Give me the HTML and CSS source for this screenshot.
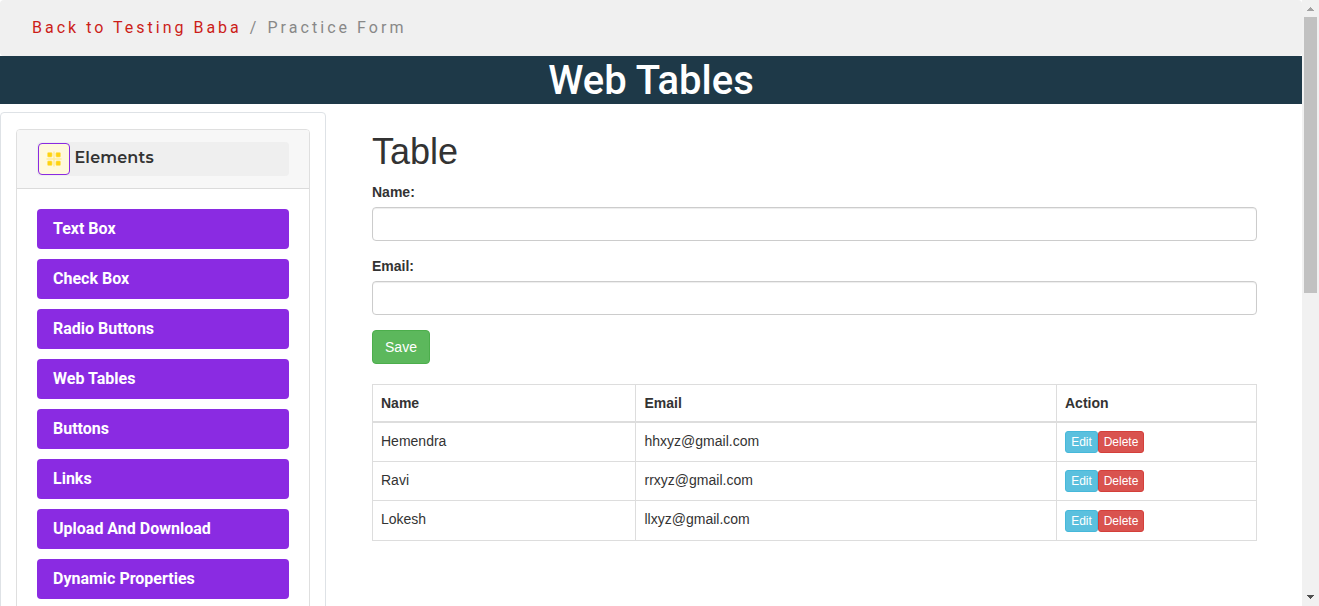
FILE: index.html
```html
<!DOCTYPE html>
<html lang="en">
<head>
<meta charset="utf-8">
<title>Web Tables</title>
<link rel="stylesheet" href="styles.css">
</head>
<body>
<div class="window">
  <div class="page">
    <nav class="breadcrumb"><a class="crumb-link">Back to Testing Baba</a><span class="crumb-rest">/</span><span class="crumb-rest">Practice Form</span></nav>
    <h1 class="title">Web Tables</h1>
    <div class="columns">
      <aside class="sidebar">
        <div class="card">
          <div class="card-header">
            <div class="toggle">
              <span class="icon-box">
                <svg width="16" height="16" viewBox="0 0 16 16">
                  <path d="M8 0.5V15.5M0.5 8H15.5" stroke="#ffeb99" stroke-width="1.4"/>
                  <g fill="#ffd30f" stroke="#ffe26a" stroke-width="0.6">
                    <rect x="1.5" y="1.5" width="4.6" height="4.6" rx="1"/>
                    <rect x="9.9" y="1.5" width="4.6" height="4.6" rx="1"/>
                    <rect x="1.5" y="9.9" width="4.6" height="4.6" rx="1"/>
                    <rect x="9.9" y="9.9" width="4.6" height="4.6" rx="1"/>
                  </g>
                </svg>
              </span>
              <span class="toggle-label">Elements</span>
            </div>
          </div>
          <div class="menu">
            <a class="menu-item">Text Box</a>
            <a class="menu-item">Check Box</a>
            <a class="menu-item">Radio Buttons</a>
            <a class="menu-item">Web Tables</a>
            <a class="menu-item">Buttons</a>
            <a class="menu-item">Links</a>
            <a class="menu-item">Upload And Download</a>
            <a class="menu-item">Dynamic Properties</a>
          </div>
        </div>
      </aside>
      <main class="content">
        <h2 class="heading">Table</h2>
        <label class="label" for="name">Name:</label>
        <input class="field" id="name" type="text">
        <label class="label" for="email">Email:</label>
        <input class="field" id="email" type="text">
        <button class="save">Save</button>
        <table class="table">
          <thead><tr><th class="col-name">Name</th><th class="col-email">Email</th><th class="col-action">Action</th></tr></thead>
          <tbody>
            <tr><td>Hemendra</td><td class="mail">hhxyz@gmail.com</td><td><div class="actions"><button class="btn edit">Edit</button><button class="btn delete">Delete</button></div></td></tr>
            <tr><td>Ravi</td><td class="mail">rrxyz@gmail.com</td><td><div class="actions"><button class="btn edit">Edit</button><button class="btn delete">Delete</button></div></td></tr>
            <tr class="last"><td>Lokesh</td><td class="mail">llxyz@gmail.com</td><td><div class="actions"><button class="btn edit">Edit</button><button class="btn delete">Delete</button></div></td></tr>
          </tbody>
        </table>
      </main>
    </div>
  </div>
  <div class="scrollbar">
    <svg class="arrow" width="17" height="17" viewBox="0 0 17 17" shape-rendering="crispEdges"><path d="M8 7h1v1h1v1h1v1h1v1H5v-1h1V9h1V8h1z" fill="#a3a3a3"/></svg>
    <div class="thumb"></div>
    <svg class="arrow arrow-down" width="17" height="17" viewBox="0 0 17 17" shape-rendering="crispEdges"><path d="M5 6h7v1h-1v1h-1v1H9v1H8V9H7V8H6V7H5z" fill="#505050"/></svg>
  </div>
</div>
</body>
</html>
```
FILE: styles.css
```css
* { box-sizing: border-box; }
body { margin: 0; overflow: hidden; background: #fff; }
.window { display: flex; height: 606px; overflow: hidden; }
.page { flex: 1; height: 606px; overflow: hidden; }
.breadcrumb {
  display: flex; gap: 8px;
  height: 56px; padding: 16px 32px; background: #f0f0f0; border-radius: 4px;
  font: 400 16px/24px Roboto, sans-serif; letter-spacing: 3px; color: #888;
}
.crumb-link { color: #cc1d18; }
.crumb-rest { letter-spacing: 3.05px; }
.title {
  margin: 0; height: 48px; background: #1e3948; color: #fff; text-align: center;
  font: 500 40px/50px Roboto, sans-serif;
}
.columns { display: flex; align-items: flex-start; padding-top: 8px; }
.sidebar { width: 326px; height: 520px; padding: 16px 15px; border: 1px solid #dee2e6; border-radius: 4px; }
.card { height: 510px; border: 1px solid #dfdfdf; border-radius: 4px; }
.card-header { height: 59px; padding: 12px 20px; background: #f7f7f7; border-bottom: 1px solid #dbdbdb; border-radius: 3px 3px 0 0; }
.toggle { display: flex; height: 34px; padding: 1px; background: #efefef; border-radius: 4px; }
.icon-box {
  display: flex; align-items: center; justify-content: center; width: 32px; height: 32px;
  background: #fff9dc; border: 1px solid #8a2be2; border-radius: 4px;
}
.toggle-label { margin-left: 4.5px; font: 600 16px/29px Montserrat, Inter, sans-serif; letter-spacing: 0.15px; color: #333; }
.menu { display: flex; flex-direction: column; gap: 10px; padding: 20px; }
.menu-item {
  height: 40px; padding: 0 16px; background: #8a2be2; border-radius: 4px; color: #fff;
  font: 700 16px/39px Roboto, sans-serif;
}
.content {
  flex: 1; display: flex; flex-direction: column; align-items: flex-start;
  padding: 20px 45px 0 46px; color: #333; font: 14px/20px "Liberation Sans", Arial, sans-serif;
}
.heading { margin: 0 0 10px; font-weight: 400; font-size: 36px; line-height: 40px; }
.label { margin-bottom: 5px; font-weight: 700; }
.field {
  width: 100%; height: 34px; margin: 0 0 15px; border: 1px solid #ccc; border-radius: 4px;
  background: #fff; box-shadow: inset 0 1px 1px rgba(0, 0, 0, 0.075);
}
.save {
  width: 58px; height: 34px; padding: 0; margin-bottom: 20px; border: 1px solid #4cae4c; border-radius: 4px;
  background: #5cb85c; color: #fff; font: 14px/20px "Liberation Sans", Arial, sans-serif;
}
.table {
  width: 100%; table-layout: fixed; border-collapse: separate; border-spacing: 0;
  border-top: 1px solid #ddd; border-left: 1px solid #ddd;
}
.table th, .table td { padding: 8px; vertical-align: top; text-align: left; border-right: 1px solid #ddd; border-bottom: 1px solid #ddd; }
.table th { height: 38px; border-bottom-width: 2px; }
.table td { height: 39px; }
.table .last td { height: 40px; }
.table .col-email, .table .mail { padding-left: 8.5px; }
.col-name { width: 263px; }
.col-email { width: 421px; }
.actions { display: flex; height: 22px; }
.last .actions { height: 23px; padding-top: 1px; }
.btn { height: 22px; padding: 0; border: 1px solid; border-radius: 3px; color: #fff; font: 12px/18px "Liberation Sans", Arial, sans-serif; }
.edit { width: 33px; background: #5bc0de; border-color: #46b8da; }
.delete { width: 46px; background: #d9534f; border-color: #d43f3a; }
.scrollbar { display: flex; flex-direction: column; align-items: center; width: 17px; background: #f1f1f1; }
.arrow { display: block; }
.thumb { width: 13px; height: 276px; background: #c1c1c1; }
.arrow-down { margin-top: auto; }
```
